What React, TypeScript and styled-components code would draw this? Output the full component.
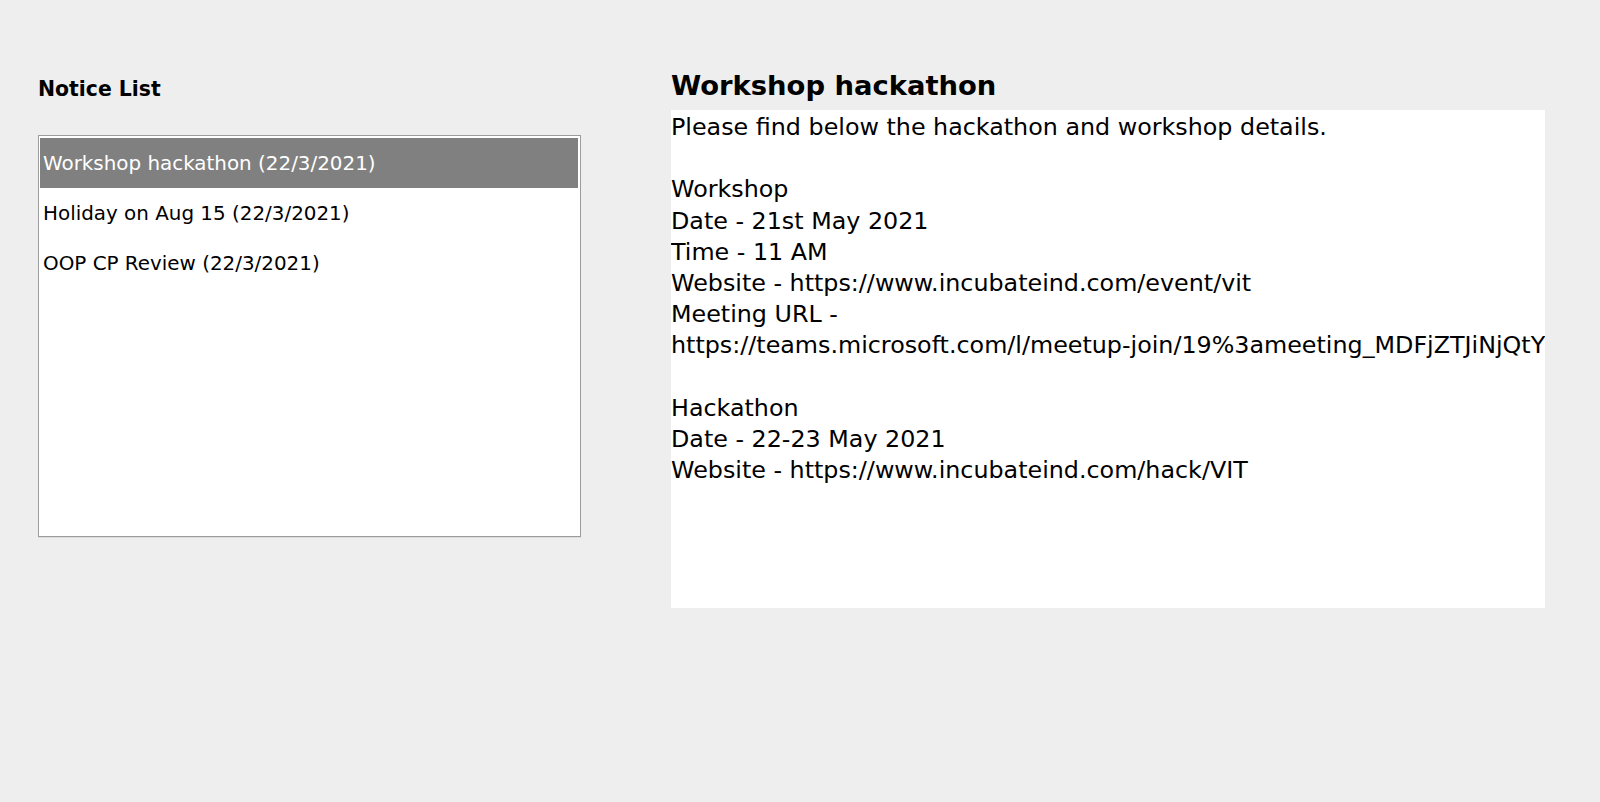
import React, { useState } from "react";
import styled, { createGlobalStyle } from "styled-components";

const Global = createGlobalStyle`
  html, body { margin: 0; padding: 0; background: #eeeeee; }
  body { font-family: "DejaVu Sans", "Liberation Sans", sans-serif; color: #000; }
`;

const Page = styled.div`
  display: flex;
  align-items: flex-start;
  width: 1600px;
  height: 802px;
  box-sizing: border-box;
  padding: 0 0 0 38px;
  background: #eeeeee;
`;

const LeftColumn = styled.div`
  display: flex;
  flex-direction: column;
  width: 543px;
  padding-top: 76px;
`;

const ListTitle = styled.div`
  font-size: 20.4px;
  font-weight: bold;
  line-height: 26px;
  height: 26px;
`;

const ListBox = styled.div`
  margin-top: 33px;
  height: 402px;
  box-sizing: border-box;
  border: 1px solid #9c9c9c;
  box-shadow: 0 1px 0 #dcdcdc;
  background: #ffffff;
  padding: 2px 2px 2px 1px;
  display: flex;
  flex-direction: column;
`;

const Row = styled.div<{ $selected?: boolean }>`
  height: 50px;
  display: flex;
  align-items: center;
  padding-left: 3px;
  font-size: 19.9px;
  background: ${(p) => (p.$selected ? "#808080" : "transparent")};
  color: ${(p) => (p.$selected ? "#ffffff" : "#000000")};
  white-space: nowrap;
  cursor: default;
`;

const RightColumn = styled.div`
  display: flex;
  flex-direction: column;
  margin-left: 90px;
  width: 874px;
  padding-top: 68px;
`;

const Heading = styled.div`
  font-size: 27.4px;
  font-weight: bold;
  line-height: 36px;
  height: 42px;
  white-space: nowrap;
`;

const Detail = styled.div`
  background: #ffffff;
  height: 498px;
  box-sizing: border-box;
  padding-top: 2px;
  overflow: hidden;
  font-size: 23.8px;
  line-height: 31.17px;
  white-space: pre;
`;

const notices = [
  {
    title: "Workshop hackathon",
    date: "22/3/2021",
    body: `Please find below the hackathon and workshop details.

Workshop
Date - 21st May 2021
Time - 11 AM
Website - https://www.incubateind.com/event/vit
Meeting URL -
https://teams.microsoft.com/l/meetup-join/19%3ameeting_MDFjZTJiNjQtYzE4Ny00ZjU5

Hackathon
Date - 22-23 May 2021
Website - https://www.incubateind.com/hack/VIT`,
  },
  { title: "Holiday on Aug 15", date: "22/3/2021", body: "Holiday on Aug 15." },
  { title: "OOP CP Review", date: "22/3/2021", body: "OOP CP Review." },
];

export default function App() {
  const [sel, setSel] = useState(0);
  const n = notices[sel];
  return (
    <>
      <Global />
      <Page>
        <LeftColumn>
          <ListTitle>Notice List</ListTitle>
          <ListBox>
            {notices.map((x, i) => (
              <Row key={i} $selected={i === sel} onClick={() => setSel(i)}>
                {x.title} ({x.date})
              </Row>
            ))}
          </ListBox>
        </LeftColumn>
        <RightColumn>
          <Heading>{n.title}</Heading>
          <Detail>{n.body}</Detail>
        </RightColumn>
      </Page>
    </>
  );
}
